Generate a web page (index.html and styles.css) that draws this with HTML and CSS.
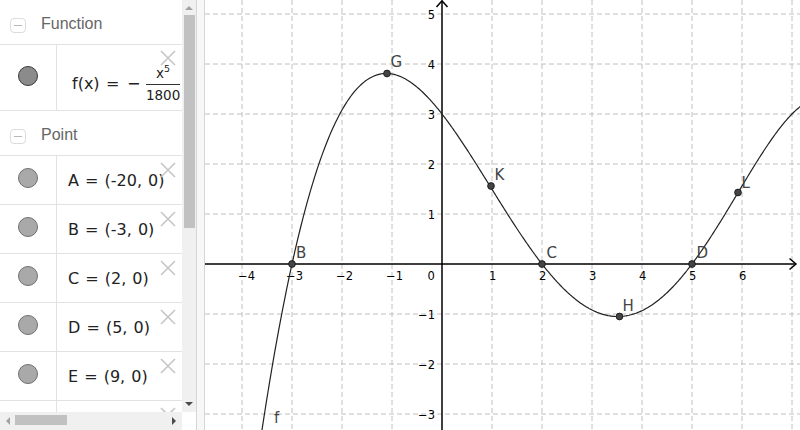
FILE: index.html
```html
<!DOCTYPE html>
<html lang="en">
<head>
<meta charset="utf-8">
<title>Graphing</title>
<link rel="stylesheet" href="styles.css">
</head>
<body>
<div class="app">
  <aside class="sidebar">
    <div class="sidebar-main">
      <div class="list">
        <div class="group-head">
          <span class="toggle"></span><span class="group-title">Function</span>
        </div>
        <div class="item item-func">
          <div class="marble-cell"><span class="marble marble-dark"></span></div>
          <div class="expr expr-func">f(x)<span class="eq">=</span><span class="neg">−</span><span class="frac"><span class="num">x<sup class="sup">5</sup></span><span class="den">1800</span></span></div>
          <svg class="del" viewBox="0 0 16 16"><path d="M1 1L15 15M15 1L1 15"/></svg>
        </div>
        <div class="group-head">
          <span class="toggle"></span><span class="group-title">Point</span>
        </div>
        <div class="item item-point">
          <div class="marble-cell"><span class="marble"></span></div>
          <div class="expr">A = (-20, 0)</div>
          <svg class="del" viewBox="0 0 16 16"><path d="M1 1L15 15M15 1L1 15"/></svg>
        </div>
        <div class="item item-point">
          <div class="marble-cell"><span class="marble"></span></div>
          <div class="expr">B = (-3, 0)</div>
          <svg class="del" viewBox="0 0 16 16"><path d="M1 1L15 15M15 1L1 15"/></svg>
        </div>
        <div class="item item-point">
          <div class="marble-cell"><span class="marble"></span></div>
          <div class="expr">C = (2, 0)</div>
          <svg class="del" viewBox="0 0 16 16"><path d="M1 1L15 15M15 1L1 15"/></svg>
        </div>
        <div class="item item-point">
          <div class="marble-cell"><span class="marble"></span></div>
          <div class="expr">D = (5, 0)</div>
          <svg class="del" viewBox="0 0 16 16"><path d="M1 1L15 15M15 1L1 15"/></svg>
        </div>
        <div class="item item-point">
          <div class="marble-cell"><span class="marble"></span></div>
          <div class="expr">E = (9, 0)</div>
          <svg class="del" viewBox="0 0 16 16"><path d="M1 1L15 15M15 1L1 15"/></svg>
        </div>
        <div class="item item-point">
          <div class="marble-cell"><span class="marble"></span></div>
          <div class="expr"></div>
          <svg class="del" viewBox="0 0 16 16"><path d="M1 1L15 15M15 1L1 15"/></svg>
        </div>
      </div>
      <div class="vscroll">
        <span class="arr-up"></span>
        <span class="vthumb"></span>
        <span class="arr-down"></span>
      </div>
    </div>
    <div class="hscroll-row">
      <div class="hscroll">
        <span class="arr-left"></span>
        <span class="hthumb"></span>
        <span class="arr-right"></span>
      </div>
      <div class="corner"></div>
    </div>
  </aside>
  <div class="splitter"></div>
  <main class="graphics">
    <svg class="plot" width="595" height="430" viewBox="205 0 595 430">
      <defs>
        <clipPath id="view"><rect x="205" y="0" width="595" height="430"/></clipPath>
      </defs>
      <g clip-path="url(#view)">
        <path class="grid" d="M242 0V430M292 0V430M342 0V430M392 0V430M492 0V430M542 0V430M592 0V430M642 0V430M692 0V430M742 0V430M792 0V430"/>
        <path class="grid" d="M205 14H800M205 64H800M205 114H800M205 164H800M205 214H800M205 314H800M205 364H800M205 414H800"/>
        <path class="axis" d="M205 264H796M442 430V0.8"/>
        <path class="axis" d="M789.5 258.5L796 264L789.5 269.5M436.5 7L442 0.8L447.5 7"/>
        <g class="ticks">
          <text x="238" y="280">−4</text>
          <text x="286" y="280">−3</text>
          <text x="336" y="280">−2</text>
          <text x="386" y="280">−1</text>
          <text x="427.5" y="280">0</text>
          <text x="489" y="280">1</text>
          <text x="539" y="280">2</text>
          <text x="589" y="280">3</text>
          <text x="639" y="280">4</text>
          <text x="689" y="280">5</text>
          <text x="739" y="280">6</text>
        </g>
        <g class="ticks ticks-y">
          <text x="435" y="19">5</text>
          <text x="435" y="69">4</text>
          <text x="435" y="119">3</text>
          <text x="435" y="169">2</text>
          <text x="435" y="219">1</text>
          <text x="435" y="319">−1</text>
          <text x="435" y="369">−2</text>
          <text x="435" y="419">−3</text>
        </g>
        <path id="curve" class="curve" d=""/>
        <g class="pts">
          <circle cx="292" cy="264" r="3.4"/>
          <circle cx="542" cy="264" r="3.4"/>
          <circle cx="692" cy="264" r="3.4"/>
          <circle cx="387" cy="73.5" r="3.4"/>
          <circle cx="619.5" cy="316.5" r="3.4"/>
          <circle cx="491" cy="186" r="3.4"/>
          <circle cx="738" cy="192.5" r="3.4"/>
        </g>
        <g class="labels">
          <text x="296" y="258">B</text>
          <text x="546.5" y="258">C</text>
          <text x="696.5" y="258">D</text>
          <text x="390.5" y="67">G</text>
          <text x="622.5" y="310.5">H</text>
          <text x="494.5" y="180">K</text>
          <text x="741.5" y="188">L</text>
          <text x="274" y="423">f</text>
        </g>
      </g>
    </svg>
  </main>
</div>
<script src="script.js"></script>
</body>
</html>
```

FILE: styles.css
```css
* { box-sizing: border-box; }
html, body { margin: 0; padding: 0; }
body {
  width: 800px;
  height: 430px;
  overflow: hidden;
  background: #fff;
  font-family: "DejaVu Sans", sans-serif;
}
.app {
  display: flex;
  width: 800px;
  height: 430px;
}
.sidebar {
  width: 196px;
  flex: none;
  display: flex;
  flex-direction: column;
}
.sidebar-main {
  display: flex;
  height: 412px;
}
.list {
  width: 182px;
  height: 412px;
  overflow: hidden;
  flex: none;
}
.group-head {
  height: 45px;
  border-bottom: 1px solid #e2e2e2;
  display: flex;
  align-items: flex-start;
}
.toggle {
  width: 16px;
  height: 15px;
  margin: 18px 0 0 10px;
  border: 1px solid #dcdcdc;
  border-radius: 4px;
  display: flex;
  align-items: center;
  justify-content: center;
  flex: none;
}
.toggle::before {
  content: "";
  width: 8px;
  height: 1px;
  background: #b8b8b8;
}
.group-title {
  margin: 14px 0 0 15px;
  font-family: "Liberation Sans", sans-serif;
  font-size: 16px;
  line-height: 20px;
  color: #666;
}
.item {
  position: relative;
  display: flex;
  border-bottom: 1px solid #e2e2e2;
  overflow: hidden;
}
.item-point { height: 49px; }
.item-func { height: 66px; }
.marble-cell {
  width: 57px;
  flex: none;
  border-right: 1px solid #e2e2e2;
  padding: 12px 0 0 18px;
}
.item-func .marble-cell { padding-top: 21px; }
.marble {
  display: block;
  width: 20px;
  height: 20px;
  border-radius: 50%;
  background: #a9a9a9;
  border: 1px solid #707070;
}
.marble-dark {
  background: #8b8b8b;
  border-color: #3a3a3a;
}
.expr {
  flex: 1;
  white-space: nowrap;
  overflow: hidden;
  font-size: 16px;
  line-height: 20px;
  color: #222;
  word-spacing: 1px;
  padding: 15px 0 0 11px;
}
.expr-func {
  padding: 21px 0 0 15px;
  word-spacing: 0;
}
.eq { margin-left: 6.5px; }
.neg { margin-left: 7.5px; }
.frac {
  display: inline-flex;
  flex-direction: column;
  align-items: center;
  margin-left: 5.5px;
  vertical-align: 11px;
  font-size: 13.5px;
  line-height: 14px;
}
.num {
  padding-bottom: 3.5px;
}
.sup {
  font-size: 9.5px;
  line-height: 0;
  vertical-align: 6px;
}
.den {
  border-top: 1px solid #333;
  padding-top: 3px;
}
.del {
  position: absolute;
  left: 160px;
  top: 6px;
  width: 16px;
  height: 16px;
  fill: none;
  stroke: #c6c6c6;
  stroke-width: 1.6;
}
.item-func .del { top: 5px; }
.vscroll {
  width: 14px;
  height: 412px;
  flex: none;
  background: #f0f0f0;
  display: flex;
  flex-direction: column;
  align-items: flex-start;
}
.arr-up {
  width: 0;
  height: 0;
  margin: 6px 0 0 3px;
  border-left: 4px solid transparent;
  border-right: 4px solid transparent;
  border-bottom: 4px solid #a3a3a3;
}
.vthumb {
  width: 11px;
  height: 213px;
  margin: 5px 0 0 2px;
  background: #c1c1c1;
}
.arr-down {
  width: 0;
  height: 0;
  margin: auto 0 6px 3px;
  border-left: 4px solid transparent;
  border-right: 4px solid transparent;
  border-top: 4px solid #4a4a4a;
}
.hscroll-row {
  display: flex;
  height: 18px;
}
.hscroll {
  width: 182px;
  flex: none;
  background: #f0f0f0;
  display: flex;
  align-items: center;
}
.arr-left {
  width: 0;
  height: 0;
  margin-left: 6px;
  border-top: 4px solid transparent;
  border-bottom: 4px solid transparent;
  border-right: 4px solid #a3a3a3;
}
.hthumb {
  width: 52px;
  height: 10px;
  margin-left: 5px;
  margin-top: -2px;
  background: #c1c1c1;
}
.arr-right {
  width: 0;
  height: 0;
  margin-left: auto;
  margin-right: 6px;
  border-top: 4px solid transparent;
  border-bottom: 4px solid transparent;
  border-left: 4px solid #4a4a4a;
}
.corner {
  flex: 1;
  background: #fff;
}
.splitter {
  width: 9px;
  flex: none;
  background: #f7f7f7;
  border-left: 1px solid #d6d6d6;
  border-right: 1px solid #d6d6d6;
}
.graphics {
  flex: 1;
  height: 430px;
  overflow: hidden;
}
.plot { display: block; }
.grid {
  fill: none;
  stroke: #c0c0c0;
  stroke-width: 1;
  stroke-dasharray: 5 3;
}
.axis {
  fill: none;
  stroke: #000;
  stroke-width: 1.5;
}
.ticks text {
  font-family: "DejaVu Sans", sans-serif;
  font-size: 11.5px;
  fill: #000;
}
.ticks-y text { text-anchor: end; }
.curve {
  fill: none;
  stroke: #222;
  stroke-width: 1.2;
}
.pts circle {
  fill: #444;
  stroke: #111;
  stroke-width: 0.8;
}
.labels text {
  font-family: "DejaVu Sans", sans-serif;
  font-size: 15px;
  fill: #444;
}
```

FILE: script.js
```js
(function () {
  var f = function (x) {
    return -(x + 20) * (x + 3) * (x - 2) * (x - 5) * (x - 9) / 1800;
  };
  var d = "";
  for (var x = -3.8; x <= 7.3; x += 0.02) {
    var px = 442 + 50 * x;
    var py = 264 - 50 * f(x);
    d += (d ? "L" : "M") + px.toFixed(2) + " " + py.toFixed(2);
  }
  document.getElementById("curve").setAttribute("d", d);
})();
```
